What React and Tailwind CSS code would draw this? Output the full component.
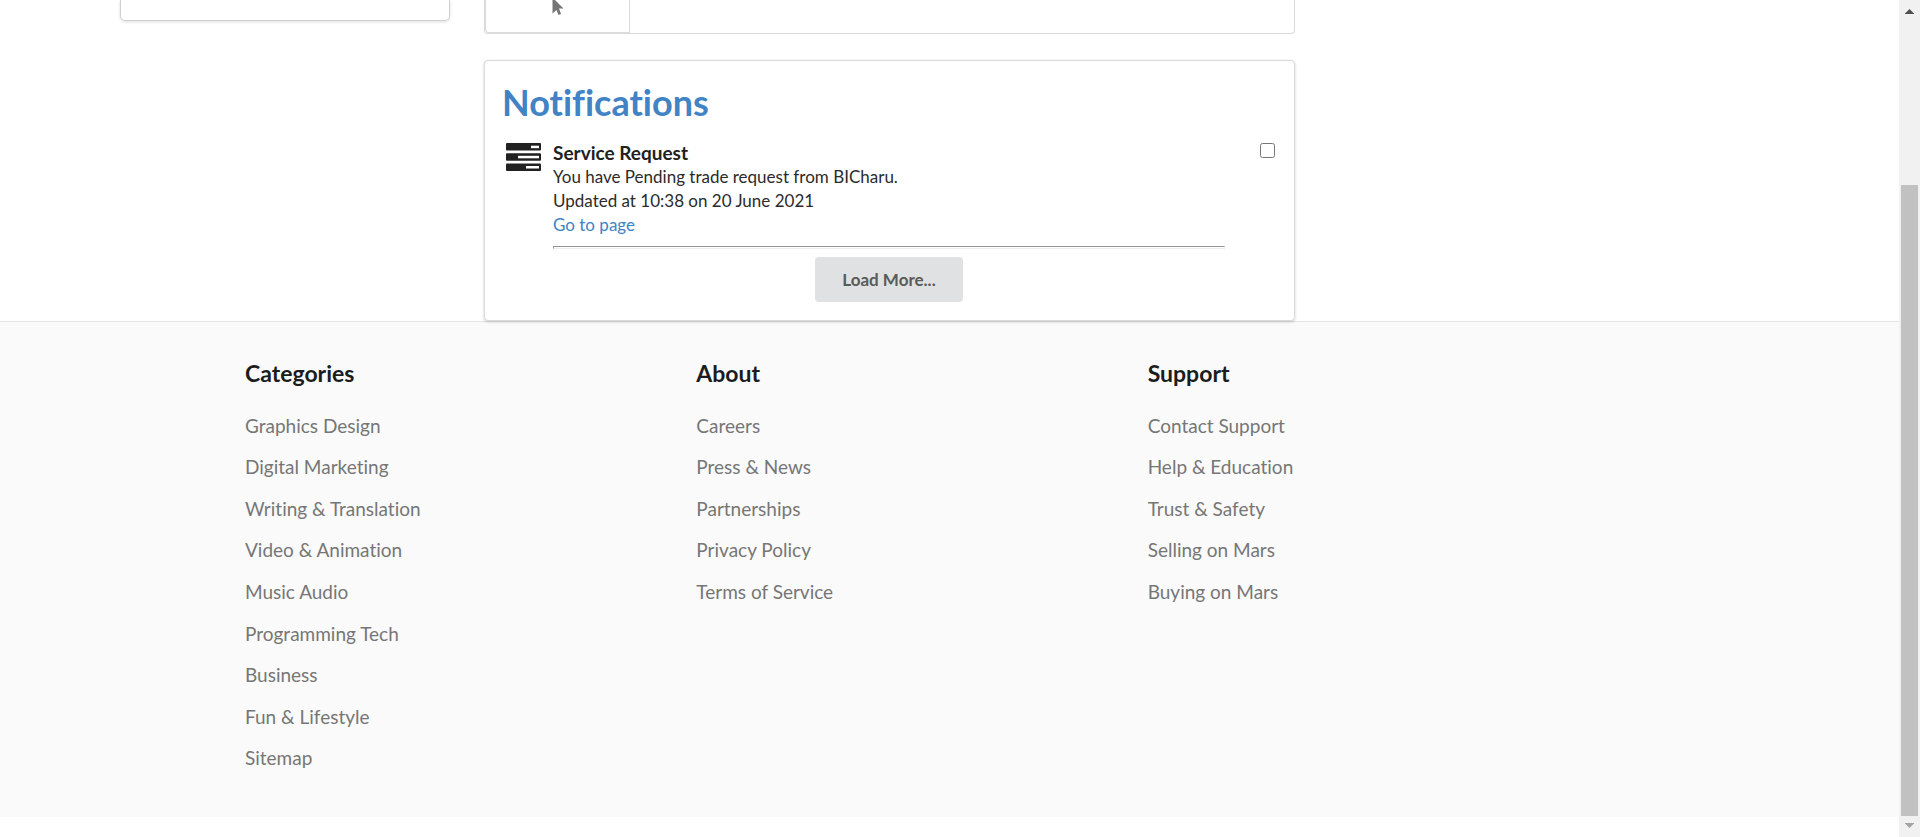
const columns = [
  {
    title: 'Categories',
    links: [
      'Graphics Design',
      'Digital Marketing',
      'Writing & Translation',
      'Video & Animation',
      'Music Audio',
      'Programming Tech',
      'Business',
      'Fun & Lifestyle',
      'Sitemap',
    ],
  },
  {
    title: 'About',
    links: ['Careers', 'Press & News', 'Partnerships', 'Privacy Policy', 'Terms of Service'],
  },
  {
    title: 'Support',
    links: ['Contact Support', 'Help & Education', 'Trust & Safety', 'Selling on Mars', 'Buying on Mars'],
  },
];

function TasksIcon() {
  return (
    <svg className="w-[35px] h-7" viewBox="0 0 35 28" fill="none" aria-hidden="true">
      <g fill="#212121">
        <rect x="0" y="0" width="35" height="7.600" rx="1" />
        <rect x="0" y="10.200" width="35" height="7.600" rx="1" />
        <rect x="0" y="20.400" width="35" height="7.600" rx="1" />
      </g>
      <g fill="#fff">
        <rect x="25" y="2.700" width="8" height="2.500" />
        <rect x="12" y="12.800" width="21" height="2.500" />
        <rect x="20" y="23" width="13" height="2.500" />
      </g>
    </svg>
  );
}

function Notifications() {
  return (
    <section className="rounded border border-[#d9dadb] bg-white px-[17px] py-[18px] shadow-[0_1px_3px_rgba(34,36,38,0.2)]">
      <h1 className="text-4xl leading-[46px] font-bold text-[#4183c4]">Notifications</h1>
      <div className="mt-4 flex items-start">
        <div className="w-[51px] shrink-0 pl-1 pt-[2px]">
          <TasksIcon />
        </div>
        <div className="min-w-0 flex-1 text-[17px] leading-6 text-[#2b2b2b]">
          <h2 className="text-[19px] leading-6 font-bold text-[#212121]">
            <label htmlFor="service-request">Service Request</label>
          </h2>
          <p>You have Pending trade request from BICharu.</p>
          <p>Updated at 10:38 on 20 June 2021</p>
          <a href="#page" className="text-[#4183c4]">Go to page</a>
          <hr className="mt-[9px] h-[3px] border border-[#eee] border-t-[#949494] border-l-[#949494]" />
          <div className="mt-2 flex justify-center">
            <button type="button" className="h-[45px] rounded bg-[#e0e1e2] px-[27px] font-bold text-[#5a5a5a]">
              Load More...
            </button>
          </div>
        </div>
        <div className="flex w-[52px] shrink-0 justify-end pt-[2px]">
          <input id="service-request" type="checkbox" className="m-0 mr-[2px] size-[15px]" />
        </div>
      </div>
    </section>
  );
}

function Footer() {
  return (
    <footer className="border-t border-[#e4e4e4] bg-[#fafafa] pt-9 pb-[38px] pl-[245px] pr-[300px]">
      <div className="grid grid-cols-3">
        {columns.map((column) => (
          <nav key={column.title} aria-label={column.title}>
            <h3 className="text-[23px] leading-[30px] font-bold text-[#1b1c1d]">{column.title}</h3>
            <ul className="mt-[17px] grid min-h-[374px] grid-rows-9 items-center">
              {column.links.map((link) => (
                <li key={link} className="text-[19px] leading-6">
                  <a href="#link" className="text-[#767676]">{link}</a>
                </li>
              ))}
            </ul>
          </nav>
        ))}
      </div>
    </footer>
  );
}

function Scrollbar() {
  return (
    <div className="flex w-[21px] shrink-0 flex-col items-center bg-[#f1f1f1]" aria-hidden="true">
      <svg className="mt-[9px] w-[9px] h-[5px]" viewBox="0 0 9 5">
        <path d="M4.500 0 9 4.500V5H0V4.500Z" fill="#505050" />
      </svg>
      <div className="mt-[171px] w-[17px] flex-1 bg-[#c1c1c1]" />
      <svg className="mt-[7px] mb-[9px] w-[9px] h-[5px]" viewBox="0 0 9 5">
        <path d="M0 0H9V0.500L4.500 5 0 0.500Z" fill="#a3a3a3" />
      </svg>
    </div>
  );
}

export default function App() {
  return (
    <div className="flex min-h-screen bg-white font-['Lato',sans-serif] [font-variant-ligatures:none]">
      <div className="min-w-0 flex-1">
        <main className="flex items-start pl-[120px] pr-[604px]">
          <div className="mr-[34px] h-[21px] w-[330px] shrink-0 rounded-b-[5px] border border-t-0 border-[#d0d0d1] shadow-[0_1px_3px_rgba(34,36,38,0.15)]" />
          <div className="min-w-0 flex-1">
            <div className="h-[34px] rounded-b border border-t-0 border-[#d9dadb]">
              <div className="flex h-[33px] w-[145px] justify-center rounded-bl border-r border-b border-l border-[#dcdcdc]">
                <svg className="w-3 h-4" viewBox="0 0 12 16" aria-hidden="true">
                  <path d="M0.500 0H3L11.500 8.500H7L9 14 6.500 15 4.500 10 0.500 13.500Z" fill="#757575" />
                </svg>
              </div>
            </div>
            <div className="pt-[26px]">
              <Notifications />
            </div>
          </div>
        </main>
        <Footer />
      </div>
      <Scrollbar />
    </div>
  );
}
